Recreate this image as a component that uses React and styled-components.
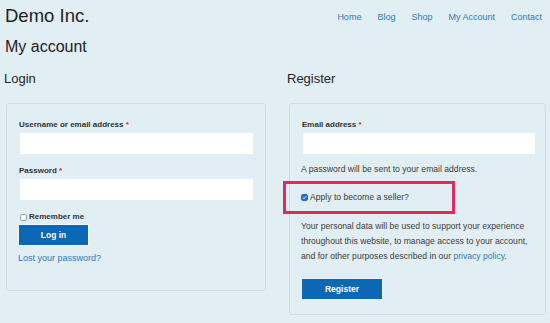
import React from "react";
import styled, { createGlobalStyle } from "styled-components";

const Global = createGlobalStyle`
  html, body { margin: 0; padding: 0; background: #e1eef3; }
  body { font-family: "Liberation Sans", Arial, sans-serif; color: #2b2b2b; }
  * { box-sizing: border-box; }
`;

const Page = styled.div`
  width: 550px;
  height: 323px;
  overflow: hidden;
  padding: 5px 8px 0 5px;
  background: #e1eef3;
`;

const Header = styled.header`
  display: flex;
  justify-content: space-between;
  align-items: center;
  height: 22px;
`;

const Brand = styled.div`
  font-size: 18.5px;
  line-height: 22px;
  color: #1f1f1f;
`;

const Nav = styled.nav`
  display: flex;
  gap: 16px;
  padding-top: 1px;
`;

const NavLink = styled.a`
  font-size: 9px;
  line-height: 12px;
  color: #2f7cba;
  text-decoration: none;
`;

const Title = styled.h1`
  margin: 10px 0 0;
  font-size: 16px;
  line-height: 20px;
  font-weight: 400;
  color: #222;
`;

const Columns = styled.div`
  display: grid;
  grid-template-columns: 261px 258px;
  column-gap: 22px;
  margin-top: 14px;
  align-items: start;
`;

const Column = styled.section`
  display: flex;
  flex-direction: column;
`;

const Heading = styled.h2`
  margin: 0 0 16px -1px;
  font-size: 13px;
  line-height: 16px;
  font-weight: 400;
  color: #262626;
`;

const Card = styled.div`
  margin-left: 1px;
  border: 1px solid #cfdce2;
  border-radius: 3px;
  padding: 15px ${(p) => p.$pr}px ${(p) => p.$pb}px ${(p) => p.$pl}px;
  display: flex;
  flex-direction: column;
`;

const Label = styled.label`
  display: block;
  font-size: 8px;
  line-height: 12px;
  font-weight: 700;
  color: #333;
  margin-bottom: 1px;
`;

const Req = styled.span`
  color: #e0262a;
`;

const Input = styled.div`
  height: 23px;
  background: #fff;
  border: 1px solid #e6eef2;
  margin-bottom: ${(p) => p.$mb || 0}px;
`;

const CheckRow = styled.div`
  position: relative;
  display: flex;
  align-items: center;
  gap: 2px;
  font-size: ${(p) => (p.$bold ? 8 : 8.6)}px;
  font-weight: ${(p) => (p.$bold ? 700 : 400)};
  line-height: 12px;
  color: ${(p) => (p.$bold ? "#333" : "#3a3a3a")};
  margin: ${(p) => p.$m};
`;

const Box = styled.span`
  width: 7px;
  height: 7px;
  border-radius: 2px;
  border: 1px solid ${(p) => (p.$on ? "#1f6ed4" : "#9aa3a8")};
  background: ${(p) => (p.$on ? "#2271d8" : "#fff")};
  display: inline-flex;
  align-items: center;
  justify-content: center;
  margin-left: ${(p) => p.$ml || 0}px;
  flex: none;
`;

const Highlight = styled.div`
  position: absolute;
  left: -18px;
  top: -10px;
  width: 172px;
  height: 33px;
  border: 3px solid #e3285e;
  pointer-events: none;
`;

const Button = styled.button`
  width: ${(p) => p.$w}px;
  height: 20px;
  border: none;
  background: #0c67b5;
  box-shadow: 0 0 0 1px rgba(255, 255, 255, 0.55);
  color: #fff;
  font-family: inherit;
  font-size: 8.5px;
  font-weight: 700;
  padding: 0;
  margin: ${(p) => p.$m};
`;

const Link = styled.a`
  font-size: 9px;
  line-height: 12px;
  color: #2f7cba;
  text-decoration: none;
  margin-top: 7px;
  margin-left: -1px;
`;

const Text = styled.p`
  margin: ${(p) => p.$m};
  font-size: 8.6px;
  line-height: ${(p) => p.$lh}px;
  color: #3d3d3d;
`;

const InlineLink = styled.a`
  color: #2f7cba;
  text-decoration: none;
`;

export default function App() {
  return (
    <>
      <Global />
      <Page>
        <Header>
          <Brand>Demo Inc.</Brand>
          <Nav>
            <NavLink>Home</NavLink>
            <NavLink>Blog</NavLink>
            <NavLink>Shop</NavLink>
            <NavLink>My Account</NavLink>
            <NavLink>Contact</NavLink>
          </Nav>
        </Header>
        <Title>My account</Title>
        <Columns>
          <Column>
            <Heading>Login</Heading>
            <Card $pl={12} $pr={11} $pb={26}>
              <Label>
                Username or email address <Req>*</Req>
              </Label>
              <Input $mb={10} />
              <Label>
                Password <Req>*</Req>
              </Label>
              <Input />
              <CheckRow $bold $m="10px 0 2px">
                <Box $ml={1} />
                Remember me
              </CheckRow>
              <Button $w={69} $m="0">Log in</Button>
              <Link>Lost your password?</Link>
            </Card>
          </Column>
          <Column>
            <Heading>Register</Heading>
            <Card $pl={12} $pr={9} $pb={15}>
              <Label>
                Email address <Req>*</Req>
              </Label>
              <Input />
              <Text $m="8px 0 0 -1px" $lh={12}>
                A password will be sent to your email address.
              </Text>
              <CheckRow $m="16px 0 0 -1px">
                <Box $on>
                  <svg width="5" height="5" viewBox="0 0 10 10">
                    <path
                      d="M2 5.2 L4.2 7.4 L8.2 2.6"
                      fill="none"
                      stroke="#fff"
                      strokeWidth="1.8"
                    />
                  </svg>
                </Box>
                Apply to become a seller?
                <Highlight />
              </CheckRow>
              <Text $m="16px 0 0 -1px" $lh={15}>
                Your personal data will be used to support your experience
                throughout this website, to manage access to your account,
                and for other purposes described in our{" "}
                <InlineLink>privacy policy</InlineLink>.
              </Text>
              <Button $w={80} $m="15px 0 0">Register</Button>
            </Card>
          </Column>
        </Columns>
      </Page>
    </>
  );
}
